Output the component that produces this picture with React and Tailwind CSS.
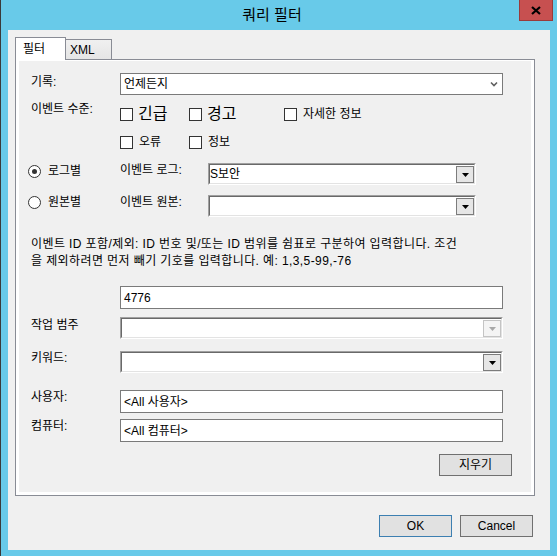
import React from "react";

// small drawings used by the dialog controls
function Chevron() {
  return (
    <svg width="8" height="6" viewBox="0 0 8 6">
      <path d="M1 1.5 L4 4.5 L7 1.5" fill="none" stroke="#606060" strokeWidth="1.6" />
    </svg>
  );
}

function Triangle({ color = "#000" }) {
  return (
    <svg width="7" height="4" viewBox="0 0 7 4">
      <path d="M0 0 H7 L3.5 4 Z" fill={color} />
    </svg>
  );
}

function CheckBox({ children, big, className = "" }) {
  return (
    <div className={`flex h-[16px] items-center ${className}`}>
      <span className="h-[13px] w-[13px] shrink-0 border border-[#333333] bg-white" />
      <span className={big ? "ml-[5px] text-[16px] leading-[16px]" : "ml-[6px] text-[12px] leading-[14px]"}>{children}</span>
    </div>
  );
}

function Radio({ checked }) {
  return (
    <span className="flex h-[13px] w-[13px] shrink-0 items-center justify-center rounded-full border border-[#333333] bg-white">
      {checked && <span className="h-[5px] w-[5px] rounded-full bg-[#333333]" />}
    </span>
  );
}

// old style sunken combo with a drop button
function OldCombo({ value, disabled, className = "" }) {
  return (
    <div
      className={`flex h-[22px] border border-t-[#a0a0a0] border-l-[#a0a0a0] border-b-white border-r-white ${className}`}
    >
      <div className="flex flex-1 items-center border border-t-[#696969] border-l-[#696969] border-b-[#e3e3e3] border-r-[#e3e3e3] bg-white">
        <span className="flex-1 text-[12px] leading-[14px]">{value}</span>
        <div
          className={`flex h-[17px] w-[18px] items-center justify-center self-end border ${
            disabled ? "border-[#c4c4c4] bg-[#f4f4f4]" : "border-[#7c7c7c] bg-[#e6e6e6]"
          }`}
        >
          <Triangle color={disabled ? "#a8a8a8" : "#000"} />
        </div>
      </div>
    </div>
  );
}

function TextBox({ value }) {
  return (
    <div className="flex h-[23px] flex-1 items-center border border-[#7a7a7a] bg-white pl-[3px] text-[12px] leading-[14px]">
      {value}
    </div>
  );
}

function Label({ children, className = "" }) {
  return <div className={`w-[89px] shrink-0 text-[12px] leading-[14px] ${className}`}>{children}</div>;
}

function Button({ children, primary, className = "" }) {
  return (
    <div
      className={`flex h-[22px] w-[73px] items-center justify-center border bg-[#e1e1e1] text-[12px] ${
        primary ? "border-[#3c7fb1]" : "border-[#707070]"
      } ${className}`}
    >
      {children}
    </div>
  );
}

export default function App() {
  return (
    <div className="flex h-[556px] w-[557px] flex-col border-l border-[#3a3a3a] bg-[#68cae9] font-['Liberation_Sans','Noto_Sans_CJK_KR',sans-serif] text-[#000]">
      {/* Title bar */}
      <div className="relative flex h-[30px] shrink-0 items-center justify-center pr-[14px]">
        <span className="text-[15px] leading-[18px]">쿼리 필터</span>
        <div className="absolute right-[4px] top-0 flex h-[21px] w-[34px] items-center justify-center border border-t-0 border-[#9a3b3b] bg-[#c75050]">
          <svg width="10" height="9" viewBox="0 0 10 9">
            <path d="M1 1 L9 8 M9 1 L1 8" stroke="#000" strokeWidth="2.2" />
          </svg>
        </div>
      </div>

      {/* Client area */}
      <div className="mx-[7px] flex h-[520px] flex-col bg-[#f0f0f0] pl-[7px] pt-[7px]">
        {/* Tabs */}
        <div className="flex h-[22px] items-end">
          <div className="relative z-10 -mb-[1px] flex h-[23px] w-[51px] items-center border border-b-0 border-[#898c95] bg-white pl-[7px] text-[12px]">
            필터
          </div>
          <div className="flex h-[20px] w-[46px] items-center border-t border-r border-[#898c95] bg-gradient-to-b from-[#f0f0f0] to-[#e5e5e5] pl-[4px] text-[12px]">
            XML
          </div>
        </div>

        {/* Tab page */}
        <div className="h-[437px] w-[520px] border border-[#898c95] bg-white pt-[1px] pl-[3px] pr-[3px] pb-[3px]">
          <div className="flex h-full flex-col bg-[#f0f0f0] pl-[12px] pr-[28px] pt-[12px]">
            {/* 기록 */}
            <div className="flex items-start">
              <Label className="mt-[2px]">기록:</Label>
              <div className="flex h-[22px] flex-1 items-center border border-[#7a7a7a] bg-white pl-[3px] pr-[4px]">
                <span className="flex-1 text-[12px] leading-[14px]">언제든지</span>
                <Chevron />
              </div>
            </div>

            {/* 이벤트 수준 */}
            <div className="mt-[7px] flex items-start">
              <Label>이벤트 수준:</Label>
              <CheckBox big className="mt-[4px] w-[69px]">긴급</CheckBox>
              <CheckBox big className="mt-[4px] w-[95px]">경고</CheckBox>
              <CheckBox className="mt-[4px]">자세한 정보</CheckBox>
            </div>
            <div className="mt-[12px] flex pl-[89px]">
              <CheckBox className="w-[69px]">오류</CheckBox>
              <CheckBox>정보</CheckBox>
            </div>

            {/* 로그별 / 원본별 */}
            <div className="-ml-[3px] mt-[13px] flex items-start">
              <div className="flex w-[92px] shrink-0 items-center pt-[1px]">
                <Radio checked />
                <span className="ml-[7px] text-[12px] leading-[14px]">로그별</span>
              </div>
              <div className="w-[88px] shrink-0 text-[12px] leading-[14px]">이벤트 로그:</div>
              <OldCombo value="S보안" className="w-[268px]" />
            </div>
            <div className="-ml-[3px] mt-[10px] flex items-start">
              <div className="flex w-[92px] shrink-0 items-center">
                <Radio />
                <span className="ml-[7px] text-[12px] leading-[14px]">원본별</span>
              </div>
              <div className="w-[88px] shrink-0 text-[12px] leading-[14px]">이벤트 원본:</div>
              <OldCombo value="" className="w-[268px]" />
            </div>

            {/* 설명 */}
            <div className="mt-[19px] text-[12px] leading-[17px] tracking-[0.4px]">
              이벤트 ID 포함/제외: ID 번호 및/또는 ID 범위를 쉼표로 구분하여 입력합니다. 조건
              <br />을 제외하려면 먼저 빼기 기호를 입력합니다. 예: 1,3,5-99,-76
            </div>

            <div className="mt-[16px] flex pl-[89px]">
              <TextBox value="4776" />
            </div>

            <div className="mt-[8px] flex items-start">
              <Label className="mt-[1px]">작업 범주</Label>
              <OldCombo value="" disabled className="flex-1" />
            </div>

            <div className="mt-[12px] flex items-start">
              <Label>키워드:</Label>
              <OldCombo value="" className="flex-1" />
            </div>

            <div className="mt-[17px] flex items-start">
              <Label>사용자:</Label>
              <TextBox value="<All 사용자>" />
            </div>

            <div className="mt-[6px] flex items-start">
              <Label>컴퓨터:</Label>
              <TextBox value="<All 컴퓨터>" />
            </div>

            <div className="-mr-[9px] mt-[12px] flex justify-end">
              <Button className="h-[21px]">지우기</Button>
            </div>
          </div>
        </div>

        {/* Dialog buttons */}
        <div className="mt-[19px] flex justify-end gap-[8px] pr-[17px]">
          <Button primary>OK</Button>
          <Button>Cancel</Button>
        </div>
      </div>
    </div>
  );
}
